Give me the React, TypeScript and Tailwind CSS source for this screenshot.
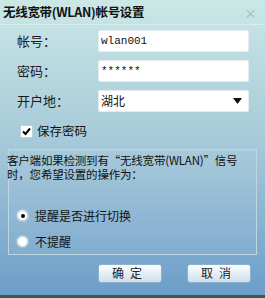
const cjk = "font-['Noto_Sans_CJK_SC','Noto_Sans',sans-serif]";

function Radio({ checked }: { checked?: boolean }) {
  return (
    <span className="flex h-[11px] w-[11px] items-center justify-center rounded-full border border-[#c9d6df] bg-white shadow-[0_0_2px_rgba(255,255,255,0.9)]">
      {checked && <span className="h-[4px] w-[4px] rounded-full bg-black" />}
    </span>
  );
}

function Field({ label, children }: { label: string; children: React.ReactNode }) {
  return (
    <div className="flex items-center">
      <span className="w-[81px] text-[13px] text-[#1a1a1a]">{label}</span>
      <div className="flex h-[22px] w-[151px] items-center rounded-[3px] bg-white px-[3px] shadow-[inset_0_0_0_1px_#e4ecef]">
        {children}
      </div>
    </div>
  );
}

export default function App() {
  return (
    <div
      className={`${cjk} relative flex h-[298px] w-[265px] flex-col overflow-hidden bg-linear-to-b from-[#cbe7e6] via-[#a4c8d8] to-[#6b9cc9]`}
    >
      {/* title bar */}
      <div className="flex h-[25px] items-center justify-between border-b border-[#d8eeee] pl-[3px] pr-[8px]">
        <span className="text-[12.5px] font-bold tracking-[-0.3px] text-[#111]">无线宽带(WLAN)帐号设置</span>
        <span className="text-[13px] leading-none text-[#9bb6bb]">×</span>
      </div>

      {/* form */}
      <div className="mt-[5px] flex flex-col gap-[8px] pl-[17px]">
        <Field label="帐号：">
          <span className="font-['Liberation_Mono',monospace] text-[11px] text-[#111]">wlan001</span>
        </Field>
        <Field label="密码：">
          <span className="font-['Liberation_Mono',monospace] text-[11px] text-[#111]">******</span>
        </Field>
        <Field label="开户地：">
          <span className="flex-1 text-[12px] text-[#111]">湖北</span>
          <svg width="9" height="6" viewBox="0 0 9 6" className="mr-[4px]">
            <path d="M0 0H9L4.5 6Z" fill="#111" />
          </svg>
        </Field>
      </div>

      {/* remember */}
      <div className="mt-[10px] flex items-center gap-[5px] pl-[21px]">
        <span className="flex h-[11px] w-[11px] items-center justify-center bg-white shadow-[0_0_1px_#ffffff]">
          <svg width="9" height="9" viewBox="0 0 9 9">
            <path d="M1 4.5L3.5 7L8 1.5" stroke="#000" strokeWidth="2" fill="none" />
          </svg>
        </span>
        <span className="text-[12.5px] text-[#111]">保存密码</span>
      </div>

      {/* panel */}
      <div className="mt-[8px] ml-[8px] h-[106px] w-[249px] border border-[#bcd6e2] bg-[#ffffff0d]">
        <p className="-ml-[2px] pt-[3px] text-[11.5px] leading-[14px] tracking-[-0.2px] text-[#111]">
          客户端如果检测到有“无线宽带(WLAN)”信号
          <br />
          时，您希望设置的操作为：
        </p>
        <div className="mt-[26px] flex flex-col gap-[8px] pl-[8px]">
          <label className="flex items-center gap-[7px] text-[12px] text-[#111]">
            <Radio checked />
            提醒是否进行切换
          </label>
          <label className="flex items-center gap-[7px] text-[12px] text-[#111]">
            <Radio />
            不提醒
          </label>
        </div>
      </div>

      {/* buttons */}
      <div className="mt-[9px] flex gap-[25px] pl-[98px]">
        <button className="h-[19px] w-[64px] rounded-[3px] border border-[#8fb0c8] bg-linear-to-b from-[#fbfdff] to-[#cfe0ee] text-[12px] leading-none tracking-[6px] text-[#222]">
          确定
        </button>
        <button className="h-[19px] w-[64px] rounded-[3px] border border-[#8fb0c8] bg-linear-to-b from-[#fbfdff] to-[#cfe0ee] text-[12px] leading-none tracking-[6px] text-[#222]">
          取消
        </button>
      </div>

      <div className="mt-auto h-[3px] bg-[#3e5a4c]" />
    </div>
  );
}
